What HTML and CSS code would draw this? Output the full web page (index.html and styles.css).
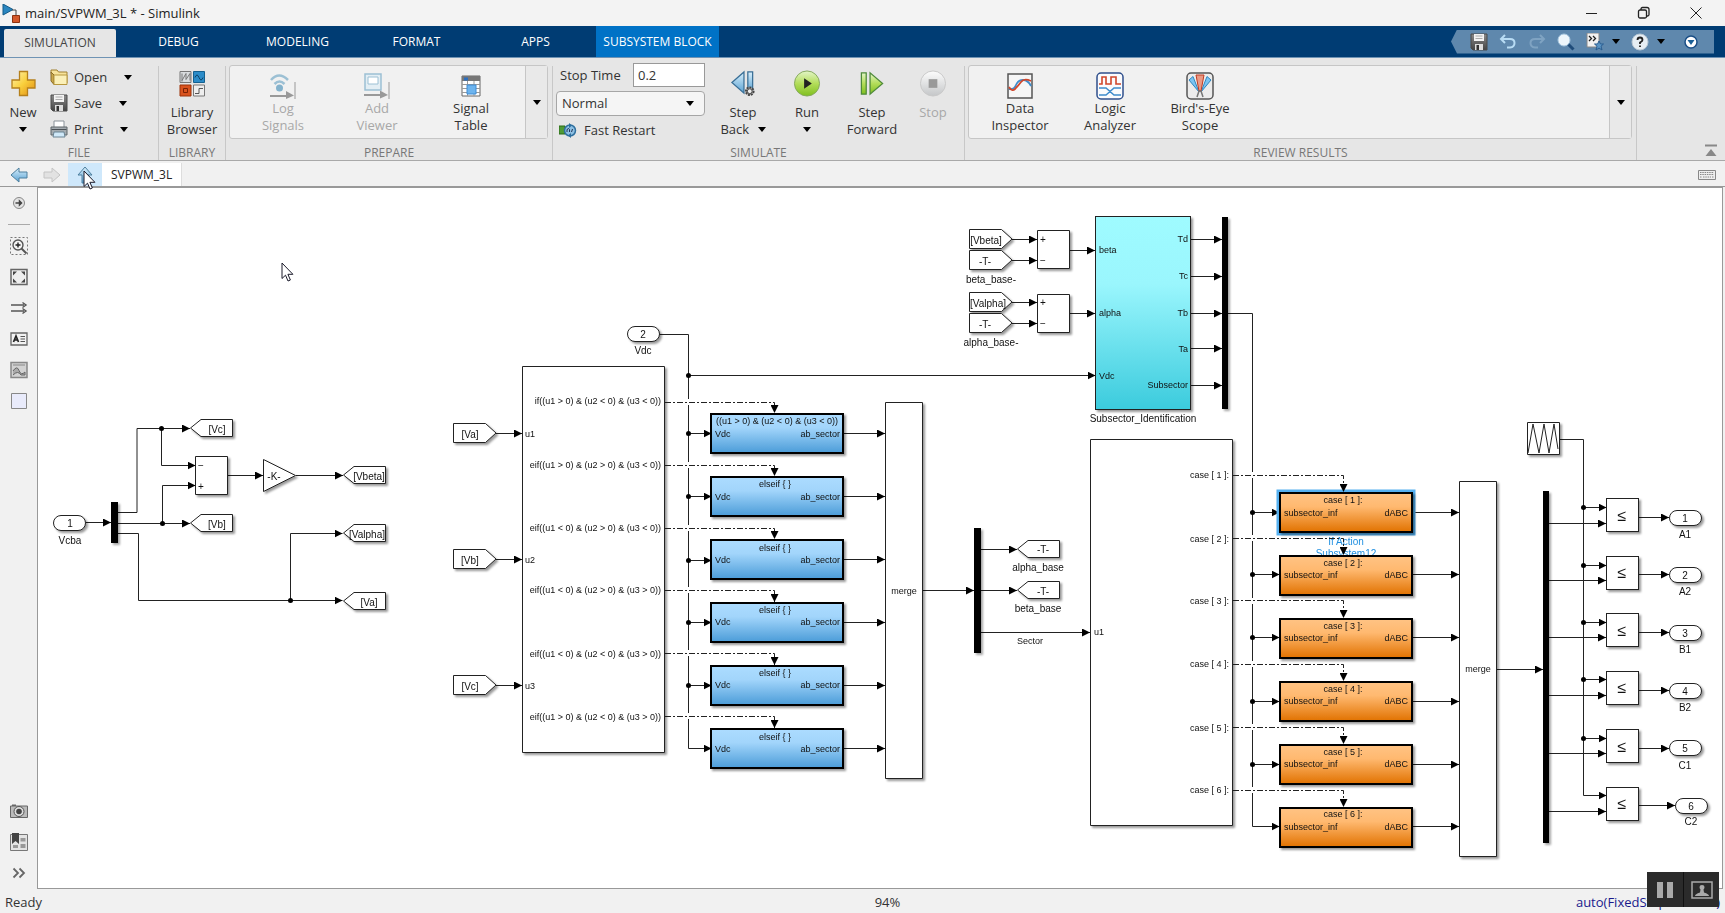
FILE: index.html
```html
<!DOCTYPE html>
<html lang="en">
<head>
<meta charset="utf-8">
<title>main/SVPWM_3L * - Simulink</title>
<link rel="stylesheet" href="styles.css">
</head>
<body>
<svg class="defs" width="0" height="0" aria-hidden="true">
  <defs>
    <linearGradient id="gYellow" x1="0" y1="0" x2="1" y2="1"><stop offset="0" stop-color="#fff3b0"/><stop offset=".5" stop-color="#f9cf3c"/><stop offset="1" stop-color="#e08a12"/></linearGradient>
    <linearGradient id="gBlue" x1="0" y1="0" x2="0" y2="1"><stop offset="0" stop-color="#d9effb"/><stop offset="1" stop-color="#5aa3d4"/></linearGradient>
    <linearGradient id="gGreen" x1="0" y1="0" x2="0" y2="1"><stop offset="0" stop-color="#e3f5c8"/><stop offset=".5" stop-color="#b3dd5a"/><stop offset="1" stop-color="#7fbf1f"/></linearGradient>
    <linearGradient id="gGrey" x1="0" y1="0" x2="0" y2="1"><stop offset="0" stop-color="#fdfdfd"/><stop offset="1" stop-color="#c4c6c8"/></linearGradient>
    <linearGradient id="gDark" x1="0" y1="0" x2="0" y2="1"><stop offset="0" stop-color="#8a8a8a"/><stop offset="1" stop-color="#444"/></linearGradient>
    <linearGradient id="gAction" x1="0" y1="0" x2="0" y2="1"><stop offset="0" stop-color="#acdcff"/><stop offset=".35" stop-color="#a2d5fb"/><stop offset="1" stop-color="#4b9cd8"/></linearGradient>
    <linearGradient id="gCase" x1="0" y1="0" x2="0" y2="1"><stop offset="0" stop-color="#ffc384"/><stop offset=".35" stop-color="#ffb970"/><stop offset="1" stop-color="#e17200"/></linearGradient>
    <linearGradient id="gCyan" x1="0" y1="0" x2="0" y2="1"><stop offset="0" stop-color="#9ffbff"/><stop offset=".35" stop-color="#9af6fd"/><stop offset="1" stop-color="#3bcbdd"/></linearGradient>
    <symbol id="disk" viewBox="0 0 18 18"><path d="M1 1h16v16H3l-2-2z" fill="url(#gDark)" stroke="#4a4a4a"/><path d="M4 1h10v7H4z" fill="#f3f3f3"/><path d="M5.500 3h7M5.500 5.500h7" stroke="#aaa"/><path d="M5 11h8v6H5z" fill="#ddd"/><path d="M6.500 12h2.500v5H6.500z" fill="#333"/></symbol>
    <symbol id="cursor" viewBox="0 0 13 20"><path d="M1 1v15.500l3.500-3.300 2.500 5.800 2.400-1-2.500-5.700h5z" fill="#fff" stroke="#1a1a2a"/></symbol>
    <marker id="arrow" viewBox="0 0 8 8" refX="8" refY="4" markerWidth="8" markerHeight="8" markerUnits="userSpaceOnUse" orient="auto"><path d="M0 0l8 4-8 4z"/></marker>
    <path id="from" d="M.5.500h32l10.500 9.500-10.500 9.500H.5z"/>
    <path id="goto" d="M42.500.500H11L.5 9l10.500 8.500h31.500z"/>
    <rect id="port" x=".5" y=".5" width="32" height="15" rx="7.500"/>
    <rect id="action" x="1" y="1" width="132" height="39"/>
    <rect id="rel" x=".5" y=".5" width="32" height="33"/>
  </defs>
</svg>

<header class="titlebar">
  <svg width="19" height="19" viewBox="0 0 19 19"><path d="M1 0l10 5.500L1 11z" fill="#2a86c0" stroke="#155a86"/><path d="M10 6h4v5" fill="none" stroke="#444"/><path d="M10.500 11.500h7v7h-7z" fill="#d4582a" stroke="#8c3210"/></svg>
  <h1 class="title">main/SVPWM_3L * - Simulink</h1>
  <div class="window-buttons">
    <button aria-label="Minimize"><svg width="14" height="14"><path d="M1 7.500h11" stroke="#222" fill="none"/></svg></button>
    <button aria-label="Restore"><svg width="14" height="14"><g fill="none" stroke="#222" stroke-width="1.300"><rect x="1.500" y="4" width="8" height="8" rx="1.500"/><path d="M4 4V3q0-1.500 1.500-1.500H10q2 0 2 2V8.500q0 1.500-1.500 1.500h-1"/></g></svg></button>
    <button aria-label="Close"><svg width="14" height="14"><path d="M1.500 1.500l11 11m0-11l-11 11" stroke="#222" fill="none"/></svg></button>
  </div>
</header>

<nav class="tabs">
  <button class="tab active">SIMULATION</button>
  <button class="tab">DEBUG</button>
  <button class="tab">MODELING</button>
  <button class="tab">FORMAT</button>
  <button class="tab">APPS</button>
  <button class="tab context">SUBSYSTEM BLOCK</button>
  <div class="quick">
    <button aria-label="Save"><svg width="18" height="18"><use href="#disk"/></svg></button>
    <button aria-label="Undo"><svg width="18" height="18" viewBox="0 0 18 18"><path d="M6 2L2 6l4 4M2.500 6H11q4.500 0 4.500 4T11 14.500H8" fill="none" stroke="#b8dcf4" stroke-width="2"/></svg></button>
    <button aria-label="Redo"><svg width="18" height="18" viewBox="0 0 18 18"><path d="M12 2l4 4-4 4M15.500 6H7q-4.500 0-4.500 4T7 14.500h3" fill="none" stroke="#7fa3c2" stroke-width="2"/></svg></button>
    <button aria-label="Find"><svg width="18" height="18" viewBox="0 0 18 18"><path d="M10.500 10.500l6 6" stroke="#1f4c7a" stroke-width="3"/><circle cx="7" cy="7" r="6" fill="#eef6fb" stroke="#a9c8e0"/></svg></button>
    <button class="pair" aria-label="Favorites"><svg width="18" height="18" viewBox="0 0 18 18"><path d="M1 0h12v14H1z" fill="#f2f2f2" stroke="#888"/><path d="M3 3l2.500 2.500L3 8M7 3l2.500 2.500L7 8" fill="none" stroke="#222" stroke-width="1.300"/><path d="M13 8l1.500 3h3L15 13.200l1 3.800-3-2-3 2 1-3.800L8.500 11h3z" fill="#5a94c4" stroke="#2b5e90"/></svg><i class="caret"></i></button>
    <button class="pair" aria-label="Help"><svg width="18" height="18" viewBox="0 0 18 18"><circle cx="9" cy="9" r="8" fill="#e6eef4" stroke="#b9c8d4"/><path d="M6.500 7q0-2.500 2.500-2.500T11.500 7Q11.500 8.300 9 9.500V11M9 12.500V14" fill="none" stroke="#222" stroke-width="1.800"/></svg><i class="caret"></i></button>
    <button class="menu" aria-label="Quick access menu"><svg width="14" height="14" viewBox="0 0 14 14"><circle cx="7" cy="7" r="6" fill="#fff" stroke="#1b4f86" stroke-width="1.500"/><path d="M3.500 5h7L7 10z" fill="#1b5f96"/></svg></button>
  </div>
</nav>

<section class="ribbon">
  <div class="group file">
    <div class="body">
      <button class="tool new"><svg width="25" height="26" viewBox="0 0 25 26"><path d="M8.500 1h8v8.500H24v8h-7.500V25h-8v-7.500H1v-8h7.500z" fill="url(#gYellow)" stroke="#b5801c" stroke-width="1.300"/></svg><span>New</span><i class="caret"></i></button>
      <div class="rows">
        <button class="row"><svg width="18" height="16" viewBox="0 0 18 16"><path d="M1 3V1h6l1.500 2H17v11H3z" fill="#f7e39a" stroke="#a08030"/><path d="M1 3l3 3v9.500L1 12z" fill="#c9a84c" stroke="#8c6d26"/><path d="M4 6h13v9.500H4z" fill="#fbf0b8" stroke="#b8983e"/></svg>Open<i class="caret"></i></button>
        <button class="row"><svg width="18" height="18"><use href="#disk"/></svg>Save<i class="caret"></i></button>
        <button class="row"><svg width="18" height="18" viewBox="0 0 18 18"><path d="M4 1h10v7H4z" fill="#fff" stroke="#8a9299"/><path d="M1 7h16v8H1z" fill="#a4abb0" stroke="#5f666b"/><path d="M1.500 9.500h15" stroke="#4a5055"/><path d="M4 12h10l1 5H3z" fill="#cfe8f8" stroke="#6b8494"/></svg>Print<i class="caret"></i></button>
      </div>
    </div>
    <h2>FILE</h2>
  </div>
  <div class="group library">
    <div class="body">
      <button class="tool"><svg width="26" height="26" viewBox="0 0 26 26"><path d="M1 1h11v11H1z" fill="#d9dcde" stroke="#777"/><path d="M3 3v8M3 10L7 3v6l4-6v7" fill="none" stroke="#777"/><path d="M14.500 1h11v11h-11z" fill="#2b8cc9" stroke="#14608f"/><path d="M16 7q2-5 4 0t4 0" fill="none" stroke="#0d4266"/><path d="M1 14.500h11v11H1z" fill="#d9531e" stroke="#9c3308"/><path d="M4.500 18h4v4h-4z" fill="none" stroke="#7a2204"/><path d="M14.500 14.500h11v11h-11z" fill="#eee" stroke="#777"/><path d="M16 23h4v-5h4" fill="none" stroke="#555"/></svg><span>Library<br>Browser</span></button>
    </div>
    <h2>LIBRARY</h2>
  </div>
  <div class="group prepare">
    <div class="body">
      <div class="gallery">
        <button class="item" disabled><svg width="26" height="26" viewBox="0 0 26 26"><g fill="none" stroke="#9cc0d4" stroke-width="2.500"><path d="M1 7Q9-2 18 7"/><path d="M4.500 11q5-5 10 0"/></g><circle cx="9.500" cy="15" r="3.500" fill="#84b2cc"/><path d="M0 23h17" stroke="#999" stroke-width="2"/><path d="M16 18l8 4.500-8 3.500z" fill="#999"/><path d="M25 9v17" stroke="#999"/></svg><span>Log<br>Signals</span></button>
        <button class="item" disabled><svg width="26" height="26" viewBox="0 0 26 26"><path d="M1 1h16v16H1z" fill="#e3eef4" stroke="#9cc0d4" stroke-width="1.500"/><path d="M4 4h10v7H4z" fill="#fff" stroke="#9cc0d4"/><path d="M0 22h17" stroke="#999" stroke-width="2"/><path d="M16 17.500l8 4.500-8 3.500z" fill="#999"/><path d="M25 9v17" stroke="#999"/></svg><span>Add<br>Viewer</span></button>
        <button class="item"><svg width="20" height="22" viewBox="0 0 20 22"><path d="M1 1h18v20H1z" fill="#fff" stroke="#666"/><path d="M1 1h18v5H1z" fill="#777"/><path d="M3 2.500h4v3H3z" fill="#2b6fc0"/><path d="M1 9.500h18M1 13.500h18M1 17.500h18M6.500 6v15M13 6v15" stroke="#999"/><path d="M6 10h9v9H6z" fill="#6db4ee" stroke="#3f8cd4"/></svg><span>Signal<br>Table</span></button>
        <button class="more" aria-label="More prepare tools"><i class="caret"></i></button>
      </div>
    </div>
    <h2>PREPARE</h2>
  </div>
  <div class="group simulate">
    <div class="body">
      <div class="settings">
        <div class="stop-time"><label for="stop">Stop Time</label><input id="stop" type="text" value="0.2"></div>
        <div class="mode"><select aria-label="Simulation mode"><option>Normal</option></select><i class="caret"></i></div>
        <button class="fast"><svg width="18" height="15" viewBox="0 0 18 15"><path d="M0 3h6v8H0z" fill="#4f9a35" stroke="#2b6b18"/><circle cx="11" cy="7.500" r="5.500" fill="#8dbfe2" stroke="#2e6f9e" stroke-width="1.500"/><path d="M10 0l3 2.500L10 5zM12 10l-3 2.500 3 2.500z" fill="#2e6f9e"/><path d="M8 9V6.500q2-2 2.500 0V9M12.500 9l1-3" fill="none" stroke="#235"/></svg>Fast Restart</button>
      </div>
      <button class="tool w68"><svg width="26" height="28" viewBox="0 0 26 28"><path d="M14 2v22L1.500 13z" fill="url(#gBlue)" stroke="#3a6f96" stroke-width="1.300"/><path d="M18 2h5v20h-5z" fill="url(#gBlue)" stroke="#3a6f96" stroke-width="1.300"/><circle cx="20" cy="22" r="4" fill="#aaa" stroke="#444" stroke-width="2" stroke-dasharray="2 1"/><circle cx="20" cy="22" r="2.500" fill="#eee" stroke="#444"/></svg><span>Step<br>Back <i class="caret inline"></i></span></button>
      <button class="tool w60"><svg width="28" height="28" viewBox="0 0 28 28"><circle cx="14" cy="14" r="13" fill="url(#gGreen)" stroke="#84a85c"/><path d="M11 8.500l8 5.500-8 5.500z" fill="#222"/></svg><span>Run</span><i class="caret"></i></button>
      <button class="tool w70"><svg width="26" height="28" viewBox="0 0 26 28"><path d="M2 3h5v22H2z" fill="url(#gGreen)" stroke="#4e8a3a" stroke-width="1.300"/><path d="M11 3v22l13-11z" fill="url(#gGreen)" stroke="#4e8a3a" stroke-width="1.300"/></svg><span>Step<br>Forward</span></button>
      <button class="tool w52" disabled><svg width="28" height="28" viewBox="0 0 28 28"><circle cx="14" cy="14" r="13" fill="url(#gGrey)" stroke="#c8c8c8"/><path d="M9.500 9.500h9v9h-9z" fill="#999"/></svg><span>Stop</span></button>
    </div>
    <h2>SIMULATE</h2>
  </div>
  <div class="group review">
    <div class="body">
      <div class="gallery">
        <button class="item"><svg width="26" height="26" viewBox="0 0 26 26"><path d="M1 1h24v24H1z" fill="#f6f6f6" stroke="#555" stroke-width="1.500"/><path d="M2 16q5 1 7-4t7-5 8 6" fill="none" stroke="#3f8ccc" stroke-width="1.800"/><path d="M2 14q3 5 6 2t6-7 10-1" fill="none" stroke="#d0472c" stroke-width="1.800"/></svg><span>Data<br>Inspector</span></button>
        <button class="item"><svg width="28" height="28" viewBox="0 0 28 28"><rect x="1" y="1" width="26" height="26" rx="4" fill="#fbfbfd" stroke="#2f4f8c" stroke-width="1.500"/><path d="M3 12h3V5h4v7h5V5h5v7h5" fill="none" stroke="#d0472c" stroke-width="1.600"/><path d="M3 16h7l8 7h7M3 23h7l8-7h7" fill="none" stroke="#3f8ccc" stroke-width="1.500"/></svg><span>Logic<br>Analyzer</span></button>
        <button class="item"><svg width="28" height="28" viewBox="0 0 28 28"><rect x="1" y="1" width="26" height="26" rx="4" fill="#ececec" stroke="#555" stroke-width="1.500"/><path d="M3 8l4-3.500L13 20zM25 8l-4-3.500L15 20z" fill="#7cc4f2" stroke="#2f86c0"/><path d="M10 3h8l-3 16h-2z" fill="#e99a86" stroke="#c03a20"/><path d="M11 25l2-6h2l2 6" fill="none" stroke="#777" stroke-width="1.500"/></svg><span>Bird's-Eye<br>Scope</span></button>
        <button class="more" aria-label="More review tools"><i class="caret"></i></button>
      </div>
    </div>
    <h2>REVIEW RESULTS</h2>
  </div>
  <button class="collapse" aria-label="Collapse toolstrip"><svg width="12" height="12"><path d="M0 1.500h12" stroke="#888" stroke-width="2"/><path d="M6 5l5.500 7H.5z" fill="#888"/></svg></button>
</section>

<nav class="pathbar">
  <button class="nav" aria-label="Back"><svg width="18" height="16" viewBox="0 0 18 16"><path d="M9 1v4h8v6H9v4L1 8z" fill="url(#gBlue)" stroke="#4d7f9e"/></svg></button>
  <button class="nav" aria-label="Forward" disabled><svg width="18" height="16" viewBox="0 0 18 16"><path d="M9 1v4H1v6h8v4l8-7z" fill="#e2e2e2" stroke="#c4c4c4"/></svg></button>
  <button class="nav up" aria-label="Up to parent"><svg width="16" height="18" viewBox="0 0 16 18"><path d="M1 9h4v8h6V9h4L8 1z" fill="url(#gBlue)" stroke="#4d7f9e"/></svg><svg class="pointer" width="13" height="20"><use href="#cursor"/></svg></button>
  <a class="crumb" href="#">SVPWM_3L</a>
  <svg class="keyboard" width="18" height="10" viewBox="0 0 18 10"><path d="M.5.500h17v9H.5z" fill="#eee" stroke="#888"/><path d="M2 2.500h14M2 4.500h14M2 7h2m1 0h8m1 0h2" stroke="#888" stroke-dasharray="1.500 .8"/></svg>
</nav>

<main class="editor">
  <aside class="palette">
    <button aria-label="Hide explorer bar"><svg width="18" height="18" viewBox="0 0 18 18"><circle cx="9" cy="9" r="5.500" fill="#e4e4e4" stroke="#888"/><path d="M5.500 9h5M9.500 7l2 2-2 2z" fill="#444" stroke="#444" stroke-width="1.500"/></svg></button>
    <hr>
    <button aria-label="Zoom"><svg width="18" height="18" viewBox="0 0 18 18"><path d="M.5.500h17v17H.5z" fill="none" stroke="#777" stroke-dasharray="2 2"/><circle cx="8" cy="8" r="5" fill="#f4f4f4" stroke="#555" stroke-width="1.400"/><path d="M5.500 8h5M8 5.500v5" stroke="#222" stroke-width="1.400"/><path d="M11.500 11.500l5 5" stroke="#555" stroke-width="2"/></svg></button>
    <button aria-label="Fit to view"><svg width="18" height="18" viewBox="0 0 18 18"><path d="M1 1.500h16v15H1z" fill="#eee" stroke="#666" stroke-width="1.500"/><path d="M3 3.500h4l-4 4zM15 3.500h-4l4 4zM3 14.500h4l-4-4zM15 14.500h-4l4-4z" fill="#444"/></svg></button>
    <button aria-label="Show sample time"><svg width="18" height="18" viewBox="0 0 18 18"><path d="M1 6h13M1 12h13M12.500 3.500l3.500 2.500-3.500 2.500M12.500 9.500l3.500 2.500-3.500 2.500" fill="none" stroke="#555" stroke-width="1.400"/></svg></button>
    <button aria-label="Annotation"><svg width="18" height="18" viewBox="0 0 18 18"><path d="M1 3h16v12H1z" fill="#f2f2f2" stroke="#666" stroke-width="1.300"/><path d="M3.500 12L6 6l2.500 6M4.500 10h3" fill="none" stroke="#222" stroke-width="1.700"/><path d="M10.500 6.500h4.500M10.500 9h4.500M10.500 11.500h4.500" stroke="#555"/></svg></button>
    <button aria-label="Image"><svg width="18" height="18" viewBox="0 0 18 18"><path d="M1 1.500h16v15H1z" fill="#d2d2d2" stroke="#888" stroke-width="1.500"/><path d="M3 4h12" stroke="#888"/><path d="M3 10q4-6 6-.5t6 1.500v3H11q-3-5-8 0" fill="#aaa" stroke="#666"/></svg></button>
    <button aria-label="Area"><svg width="18" height="18" viewBox="0 0 18 18"><path d="M1.500 1.500h15v15h-15z" fill="#e9ebfb" stroke="#888"/></svg></button>
    <button class="bottom" aria-label="Screenshot"><svg width="18" height="18" viewBox="0 0 18 18"><path d="M.5 4h17v11.500H.5z" fill="#bbb" stroke="#666"/><path d="M2 2.500h4v1.500H2z" fill="#666"/><circle cx="9" cy="9.500" r="5" fill="#ddd" stroke="#555"/><circle cx="9" cy="9.500" r="2.800" fill="#444"/></svg></button>
    <button aria-label="Model browser"><svg width="18" height="18" viewBox="0 0 18 18"><path d="M.5 1.500h17v16H.5z" fill="#e4e4e4" stroke="#777"/><path d="M10.500 5h5v3.500h-5zM10.500 11h5v4h-5zM3 12h5v3H3z" fill="#999"/><path d="M2 0h7v11l-3.500-3L2 11z" fill="#444"/></svg></button>
    <button aria-label="More"><svg width="18" height="18" viewBox="0 0 18 18"><path d="M3.500 4.500L8 9l-4.500 4.500M9.500 4.500L14 9l-4.500 4.500" fill="none" stroke="#666" stroke-width="1.800"/></svg></button>
  </aside>

  <div class="canvas">
  <svg class="diagram" width="1684" height="700" viewBox="38 188 1684 700">
    <g class="wire">
      <path d="M86 522.500h25"/><path d="M118 512.500h19V428.500h53"/><path d="M161.500 428.500V465.500h34"/>
      <path d="M118 523.500h72"/><path d="M162.500 523.500V485.500h33"/><path d="M118 533.500h20.500V600.500h204"/><path d="M290.500 600.500V533.500h52"/>
      <path d="M228 475.500h35"/><path d="M296 475.500h47"/>
      <path d="M496 433.500h26"/><path d="M496 559.500h26"/><path d="M496 685.500h26"/>
      <path d="M659 334.500h29.500V748.500h23"/><path d="M688.500 375.500h407"/>
      <path d="M688.500 433.500h23"/><path d="M688.500 496.500h23"/><path d="M688.500 560.500h23"/><path d="M688.500 622.500h23"/><path d="M688.500 685.500h23"/>
      <path d="M844 433.500h41"/><path d="M844 496.500h41"/><path d="M844 559.500h41"/><path d="M844 622.500h41"/><path d="M844 685.500h41"/><path d="M844 748.500h41"/>
      <path d="M922 590.500h52"/><path d="M981 549.500h36"/><path d="M981 590.500h36"/><path d="M981 632.500h109"/>
      <path d="M1012 239.500h25"/><path d="M1012 260.500h25"/><path d="M1012 302.500h25"/><path d="M1012 323.500h25"/>
      <path d="M1070 250.500h25"/><path d="M1070 313.500h25"/>
      <path d="M1191 239.500h31"/><path d="M1191 276.500h31"/><path d="M1191 313.500h31"/><path d="M1191 348.500h31"/><path d="M1191 385.500h31"/>
      <path d="M1228 313.500h24.500V826.500h27"/>
      <path d="M1252.500 512.500h27"/><path d="M1252.500 574.500h27"/><path d="M1252.500 637.500h27"/><path d="M1252.500 701.500h27"/><path d="M1252.500 764.500h27"/>
      <path d="M1413 512.500h46"/><path d="M1413 574.500h46"/><path d="M1413 637.500h46"/><path d="M1413 701.500h46"/><path d="M1413 764.500h46"/><path d="M1413 826.500h46"/>
      <path d="M1496 669.500h47"/><path d="M1559 439.500h24.500V795.500h23"/>
      <path d="M1583.500 507.500h23"/><path d="M1583.500 565.500h23"/><path d="M1583.500 622.500h23"/><path d="M1583.500 679.500h23"/><path d="M1583.500 738.500h23"/>
      <path d="M1549 523.500h57"/><path d="M1549 580.500h57"/><path d="M1549 637.500h57"/><path d="M1549 695.500h57"/><path d="M1549 753.500h57"/><path d="M1549 811.500h57"/>
      <path d="M1639 517.500h30"/><path d="M1639 574.500h30"/><path d="M1639 632.500h30"/><path d="M1639 690.500h30"/><path d="M1639 748.500h30"/><path d="M1639 805.500h36"/>
    </g>
    <g class="gaps">
      <path d="M688.500 399v6M688.500 462v6M688.500 525v6M688.500 587v6M688.500 650v6M688.500 713v6"/>
      <path d="M1252.500 472v6M1252.500 535v6M1252.500 598v6M1252.500 661v6M1252.500 724v6M1252.500 787v6"/>
    </g>
    <g class="dots">
      <circle cx="161.500" cy="428.500" r="2.500"/><circle cx="162.500" cy="523.500" r="2.500"/><circle cx="290.500" cy="600.500" r="2.500"/>
      <circle cx="688.500" cy="375.500" r="2.500"/><circle cx="688.500" cy="433.500" r="2.500"/><circle cx="688.500" cy="496.500" r="2.500"/><circle cx="688.500" cy="560.500" r="2.500"/><circle cx="688.500" cy="622.500" r="2.500"/><circle cx="688.500" cy="685.500" r="2.500"/>
      <circle cx="1252.500" cy="512.500" r="2.500"/><circle cx="1252.500" cy="574.500" r="2.500"/><circle cx="1252.500" cy="637.500" r="2.500"/><circle cx="1252.500" cy="701.500" r="2.500"/><circle cx="1252.500" cy="764.500" r="2.500"/>
      <circle cx="1583.500" cy="507.500" r="2.500"/><circle cx="1583.500" cy="565.500" r="2.500"/><circle cx="1583.500" cy="622.500" r="2.500"/><circle cx="1583.500" cy="679.500" r="2.500"/><circle cx="1583.500" cy="738.500" r="2.500"/>
    </g>
    <g class="block">
      <use href="#port" x="53" y="515"/><use href="#port" x="627" y="326"/>
      <use href="#goto" x="190" y="419"/><use href="#goto" x="190" y="514"/><use href="#goto" x="343" y="466"/><use href="#goto" x="343" y="524"/><use href="#goto" x="343" y="592"/>
      <path d="M195.500 456.500h32v38h-32zM263.500 459.500l32 16-32 16z"/>
      <use href="#from" x="453" y="423"/><use href="#from" x="453" y="549"/><use href="#from" x="453" y="675"/>
      <path d="M522.500 366.500h142v386h-142zM885.500 402.500h37v376h-37z"/>
      <use href="#goto" x="1017" y="540"/><use href="#goto" x="1017" y="581"/>
      <use href="#from" x="969" y="229"/><use href="#from" x="969" y="250"/><use href="#from" x="969" y="292"/><use href="#from" x="969" y="313"/>
      <path d="M1037.500 230.500h32v38h-32zM1037.500 294.500h32v38h-32z"/>
      <rect class="cyan" x="1095.500" y="216.500" width="95" height="193"/>
      <path d="M1090.500 439.500h142v386h-142zM1459.500 481.500h37v375h-37zM1527.500 422.500h32v32h-32z"/>
      <use href="#rel" x="1606" y="498"/><use href="#rel" x="1606" y="556"/><use href="#rel" x="1606" y="613"/><use href="#rel" x="1606" y="671"/><use href="#rel" x="1606" y="729"/><use href="#rel" x="1606" y="787"/>
      <use href="#port" x="1669" y="510"/><use href="#port" x="1669" y="567"/><use href="#port" x="1669" y="625"/><use href="#port" x="1669" y="683"/><use href="#port" x="1669" y="740"/><use href="#port" x="1675" y="798"/>
    </g>
    <path class="scribble" d="M1528 453l5-29 6 29 5-29 5 29 5-29 4 25"/>
    <g class="bars">
      <path d="M111 502h7v41h-7zM974 528h7v125h-7zM1222 217h6v192h-6zM1543 491h6v352h-6z"/>
    </g>
    <g class="action blue">
      <use href="#action" x="710" y="413"/><use href="#action" x="710" y="476"/><use href="#action" x="710" y="539"/><use href="#action" x="710" y="602"/><use href="#action" x="710" y="665"/><use href="#action" x="710" y="728"/>
    </g>
    <rect class="selection" x="1278.500" y="491.500" width="135" height="42"/>
    <g class="text selected"><text x="1346" y="541">If Action</text><text x="1346" y="553">Subsystem12</text></g>
    <g class="action orange">
      <use href="#action" x="1279" y="492"/><use href="#action" x="1279" y="555"/><use href="#action" x="1279" y="618"/><use href="#action" x="1279" y="681"/><use href="#action" x="1279" y="744"/><use href="#action" x="1279" y="807"/>
    </g>
    <g class="wire dashed">
      <path d="M665 402.500h109.500V413"/><path d="M665 465.500h109.500V476"/><path d="M665 528.500h109.500V539"/><path d="M665 590.500h109.500V602"/><path d="M665 653.500h109.500V665"/><path d="M665 716.500h109.500V728"/>
      <path d="M1233 475.500h110.500V492"/><path d="M1233 538.500h110.500V555"/><path d="M1233 600.500h110.500V618"/><path d="M1233 664.500h110.500V681"/><path d="M1233 727.500h110.500V744"/><path d="M1233 790.500h110.500V807"/>
    </g>

    <g class="text name">
      <text x="70" y="540">Vcba</text><text x="643" y="350">Vdc</text>
      <text x="1038" y="567">alpha_base</text><text x="1038" y="608">beta_base</text>
      <text x="991" y="279">beta_base-</text><text x="991" y="342">alpha_base-</text><text x="1143" y="418">Subsector_Identification</text>
      <text x="1685" y="534">A1</text><text x="1685" y="591">A2</text><text x="1685" y="649">B1</text><text x="1685" y="707">B2</text><text x="1685" y="765">C1</text><text x="1691" y="821">C2</text>
    </g>
    <g class="text tag">
      <text x="70" y="523">1</text><text x="643" y="334">2</text>
      <text x="217" y="429">[Vc]</text><text x="217" y="524">[Vb]</text><text x="369" y="476">[Vbeta]</text><text x="367" y="534">[Valpha]</text><text x="369" y="602">[Va]</text>
      <text x="274" y="476">-K-</text><text x="201" y="465">−</text><text x="201" y="486">+</text>
      <text x="470" y="434">[Va]</text><text x="470" y="560">[Vb]</text><text x="470" y="686">[Vc]</text>
      <text x="1043" y="549">-T-</text><text x="1043" y="591">-T-</text>
      <text x="986" y="240">[Vbeta]</text><text x="985" y="261">-T-</text><text x="988" y="303">[Valpha]</text><text x="985" y="324">-T-</text>
      <text x="1043" y="239">+</text><text x="1043" y="260">−</text><text x="1043" y="302">+</text><text x="1043" y="323">−</text>
      <text x="1685" y="518">1</text><text x="1685" y="575">2</text><text x="1685" y="633">3</text><text x="1685" y="691">4</text><text x="1685" y="748">5</text><text x="1691" y="806">6</text>
    </g>
    <g class="text relation">
      <text x="1622" y="515">≤</text><text x="1622" y="572">≤</text><text x="1622" y="630">≤</text><text x="1622" y="687">≤</text><text x="1622" y="746">≤</text><text x="1622" y="803">≤</text>
    </g>
    <g class="text center">
      <text x="904" y="591">merge</text><text x="1478" y="669">merge</text><text x="1030" y="641">Sector</text>
      <text x="777" y="421">((u1 &gt; 0) &amp; (u2 &lt; 0) &amp; (u3 &lt; 0))</text><text x="775" y="484">elseif { }</text><text x="775" y="548">elseif { }</text><text x="775" y="610">elseif { }</text><text x="775" y="673">elseif { }</text><text x="775" y="737">elseif { }</text>
      <text x="1343" y="500">case [ 1 ]:</text><text x="1343" y="563">case [ 2 ]:</text><text x="1343" y="626">case [ 3 ]:</text><text x="1343" y="689">case [ 4 ]:</text><text x="1343" y="752">case [ 5 ]:</text><text x="1343" y="814">case [ 6 ]:</text>
    </g>
    <g class="text start">
      <text x="525" y="434">u1</text><text x="525" y="560">u2</text><text x="525" y="686">u3</text><text x="1094" y="632">u1</text>
      <text x="715" y="434">Vdc</text><text x="715" y="497">Vdc</text><text x="715" y="560">Vdc</text><text x="715" y="622">Vdc</text><text x="715" y="685">Vdc</text><text x="715" y="749">Vdc</text>
      <text x="1099" y="250">beta</text><text x="1099" y="313">alpha</text><text x="1099" y="376">Vdc</text>
      <text x="1284" y="513">subsector_inf</text><text x="1284" y="575">subsector_inf</text><text x="1284" y="638">subsector_inf</text><text x="1284" y="701">subsector_inf</text><text x="1284" y="764">subsector_inf</text><text x="1284" y="827">subsector_inf</text>
    </g>
    <g class="text end">
      <text x="661" y="401">if((u1 &gt; 0) &amp; (u2 &lt; 0) &amp; (u3 &lt; 0))</text><text x="661" y="465">eif((u1 &gt; 0) &amp; (u2 &gt; 0) &amp; (u3 &lt; 0))</text><text x="661" y="528">eif((u1 &lt; 0) &amp; (u2 &gt; 0) &amp; (u3 &lt; 0))</text><text x="661" y="590">eif((u1 &lt; 0) &amp; (u2 &gt; 0) &amp; (u3 &gt; 0))</text><text x="661" y="654">eif((u1 &lt; 0) &amp; (u2 &lt; 0) &amp; (u3 &gt; 0))</text><text x="661" y="717">eif((u1 &gt; 0) &amp; (u2 &lt; 0) &amp; (u3 &gt; 0))</text>
      <text x="840" y="434">ab_sector</text><text x="840" y="497">ab_sector</text><text x="840" y="560">ab_sector</text><text x="840" y="622">ab_sector</text><text x="840" y="685">ab_sector</text><text x="840" y="749">ab_sector</text>
      <text x="1188" y="239">Td</text><text x="1188" y="276">Tc</text><text x="1188" y="313">Tb</text><text x="1188" y="349">Ta</text><text x="1188" y="385">Subsector</text>
      <text x="1229" y="475">case [ 1 ]:</text><text x="1229" y="539">case [ 2 ]:</text><text x="1229" y="601">case [ 3 ]:</text><text x="1229" y="664">case [ 4 ]:</text><text x="1229" y="728">case [ 5 ]:</text><text x="1229" y="790">case [ 6 ]:</text>
      <text x="1408" y="513">dABC</text><text x="1408" y="575">dABC</text><text x="1408" y="638">dABC</text><text x="1408" y="701">dABC</text><text x="1408" y="764">dABC</text><text x="1408" y="827">dABC</text>
    </g>
    <use href="#cursor" x="281" y="262" width="13" height="20"/>
  </svg>
  </div>
</main>

<footer class="status">
  <span>Ready</span><span class="zoom">94%</span><a class="solver" href="#">auto(FixedStepDiscrete)</a>
</footer>

<div class="recorder">
  <button aria-label="Pause"><svg width="16" height="18"><path d="M0 1h6v16H0zM10 1h6v16h-6z" fill="#aaa"/></svg></button>
  <button aria-label="Webcam"><svg width="22" height="18" viewBox="0 0 22 18"><path d="M1 1h20v16H1z" fill="none" stroke="#aaa" stroke-width="1.500"/><path d="M4 15q0-2 5-3.500l.5-3Q8.500 7.500 8.500 6q0-2 2.500-2t2.500 2q0 1.500-1 2.500l.5 3q5 1.500 5 3.500z" fill="#aaa"/></svg></button>
</div>
</body>
</html>
```
FILE: styles.css
```css
* { box-sizing: border-box; }

body {
  margin: 0;
  height: 100vh;
  display: flex;
  flex-direction: column;
  background: #f1f1f1;
  color: #333;
  font: 13px/17px "Open Sans", "Noto Sans", sans-serif;
  overflow: hidden;
}

button {
  font: inherit;
  color: inherit;
  background: none;
  border: 0;
  padding: 0;
}

button svg { display: block; flex: none; }
.defs { position: absolute; }

.caret {
  display: block;
  width: 0;
  height: 0;
  border: 4px solid transparent;
  border-top: 5px solid #000;
  border-bottom: 0;
}
.caret.inline { display: inline-block; margin: 0 0 2px 5px; }

/* Window title */
.titlebar {
  height: 26px;
  display: flex;
  align-items: center;
  gap: 4px;
  padding: 0 22px 0 2px;
  background: #f3f3f3;
}
.title { margin: 0; font-size: 13px; font-weight: 400; color: #222; }
.window-buttons { margin-left: auto; display: flex; gap: 38px; }

/* Toolstrip tabs */
.tabs {
  height: 32px;
  flex: none;
  display: flex;
  align-items: flex-end;
  padding: 0 11px 0 4px;
  background: #003c73;
  border-bottom: 1px solid #6f93b4;
}
.tab {
  width: 119px;
  height: 31px;
  color: #fff;
  font-size: 12px;
  white-space: nowrap;
}
.tab.active { width: 112px; height: 28px; margin-right: 3px; padding-bottom: 1px; background: #e6e6e6; color: #444; border-radius: 2px 2px 0 0; }
.tab.context { width: 123px; margin-left: 1px; background: #0072c6; }
.quick {
  align-self: center;
  display: flex;
  align-items: center;
  gap: 11px;
  margin-left: auto;
  height: 24px;
  padding: 0 16px 0 19px;
  background: #5f88ad;
  clip-path: polygon(6px 0, 100% 0, 100% 100%, 6px 100%, 0 50%);
}
.pair { display: flex; align-items: center; gap: 8px; }
.menu { margin-left: 8px; }

/* Ribbon */
.ribbon {
  height: 103px;
  flex: none;
  display: flex;
  background: #e6e6e6;
  border-bottom: 1px solid #a9a9a9;
}
.group {
  display: flex;
  flex-direction: column;
  margin-top: 8px;
  border-right: 1px solid #c8c8c8;
}
.group h2 {
  margin: 0;
  font-size: 12px;
  line-height: 14px;
  font-weight: 400;
  text-align: center;
  color: #777;
}
.body { flex: 1; display: flex; }
.file { width: 159px; }
.library { width: 67px; }
.prepare { width: 327px; }
.simulate { width: 412px; }
.review { flex: 1; }

.tool {
  display: flex;
  flex-direction: column;
  align-items: center;
  gap: 7px;
  padding-top: 4px;
  height: 76px;
  line-height: 17px;
}
.tool svg { height: 27px; }
.tool .caret { margin-top: -1px; }
.tool .caret.inline { margin-top: 0; }
.new { width: 46px; }
.library .tool { width: 66px; }
.w68 { width: 68px; }
.w60 { width: 60px; }
.w70 { width: 70px; }
.w52 { width: 52px; }
button:disabled { color: #a8a8a8; }

.rows { display: grid; grid-template-rows: repeat(3, 26px); margin: -2px 0 0 4px; align-content: start; }
.row { display: flex; align-items: center; gap: 6px; }
.row .caret { margin-left: 11px; }

.gallery {
  flex: 1;
  display: flex;
  height: 74px;
  margin: -1px 4px 0 3px;
  padding-left: 6px;
  background: #f1f1f1;
  border: 1px solid #c6c6c6;
  border-radius: 3px;
}
.item {
  width: 94px;
  display: flex;
  flex-direction: column;
  align-items: center;
  padding-top: 6px;
}
.review .item { width: 90px; }
.item svg { height: 28px; }
.more {
  width: 22px;
  margin-left: auto;
  display: flex;
  align-items: center;
  justify-content: center;
  background: #e9e9e9;
  border-left: 1px solid #c6c6c6;
}

.settings { width: 149px; margin: -3px 4px 0 3px; }
.stop-time { display: flex; justify-content: space-between; align-items: center; padding-left: 4px; }
.stop-time input {
  width: 72px;
  height: 24px;
  padding: 0 4px;
  font: inherit;
  color: inherit;
  background: #fff;
  border: 1px solid #999;
}
.mode { position: relative; margin-top: 4px; }
.mode select {
  display: block;
  width: 100%;
  height: 25px;
  padding: 0 5px;
  appearance: none;
  font: inherit;
  color: inherit;
  background: #f5f5f5;
  border: 1px solid #a6a6a6;
  border-radius: 4px;
}
.mode .caret { position: absolute; right: 11px; top: 10px; }
.fast { display: flex; align-items: center; gap: 7px; margin-top: 6px; padding-left: 3px; }

.collapse { width: 88px; display: flex; align-items: flex-end; justify-content: flex-end; padding: 0 8px 4px 0; }

/* Model path */
.pathbar {
  height: 25px;
  flex: none;
  display: flex;
  align-items: center;
  padding: 2px 9px 0 2px;
}
.nav { width: 33px; height: 23px; display: grid; place-items: center; }
.up { position: relative; width: 34px; background: #cfe8fb; }
.pointer { position: absolute; left: 15px; top: 7px; z-index: 1; }
.crumb {
  height: 23px;
  padding: 1px 9px 0;
  font-size: 12px;
  line-height: 22px;
  background: #fff;
  color: #222;
  text-decoration: none;
  border-right: 1px solid #ddd;
}
.keyboard { margin-left: auto; }

/* Editor */
.editor { flex: 1; min-height: 0; display: flex; border-top: 1px solid #999; }
.palette {
  width: 37px;
  display: flex;
  flex-direction: column;
  align-items: center;
  gap: 13px;
  padding: 7px 0 7px 1px;
}
.palette hr { width: 22px; margin: -1px 0; border: 0; border-top: 1px solid #aaa; }
.palette .bottom { margin-top: auto; }
.canvas {
  flex: 1;
  min-width: 0;
  overflow: hidden;
  margin-right: 2px;
  background: #fff;
  border: 1px solid #999;
}
.diagram { display: block; }

.wire path { fill: none; stroke: #222; marker-end: url(#arrow); }
.dashed path { stroke-dasharray: 6 2 2 2; }
.gaps { stroke: #fff; stroke-width: 2; }
.block { fill: #fff; stroke: #222; filter: drop-shadow(2px 2px 1px rgba(0, 0, 0, .4)); }
.block .cyan { fill: url(#gCyan); }
.scribble { fill: none; stroke: #222; }
.bars { filter: drop-shadow(2px 2px 1px rgba(0, 0, 0, .35)); }
.action { stroke: #000; stroke-width: 2; filter: drop-shadow(2px 2px 1px rgba(0, 0, 0, .4)); }
.blue { fill: url(#gAction); }
.orange { fill: url(#gCase); }
.selection { fill: none; stroke: #55b0f0; stroke-width: 4; }

.text {
  font: 9px "Liberation Sans", Arial, sans-serif;
  fill: #111;
  text-anchor: middle;
  dominant-baseline: central;
}
.name, .tag, .selected { font-size: 10px; }
.relation { font-size: 16px; }
.start { text-anchor: start; }
.end { text-anchor: end; }
.selected { fill: #1f8fe0; }

/* Status */
.status {
  height: 24px;
  flex: none;
  display: grid;
  grid-template-columns: 1fr auto 1fr;
  align-items: center;
  padding: 3px 5px 0;
}
.zoom { margin-left: 50px; }
.solver { justify-self: end; color: #1a1a8c; text-decoration: none; }

.recorder {
  position: absolute;
  right: 6px;
  bottom: 6px;
  width: 72px;
  height: 35px;
  display: grid;
  grid-template-columns: 1fr 1fr;
  background: #2b2b2b;
}
.recorder button { display: grid; place-items: center; }
.recorder button + button { border-left: 1px solid #111; }
```
